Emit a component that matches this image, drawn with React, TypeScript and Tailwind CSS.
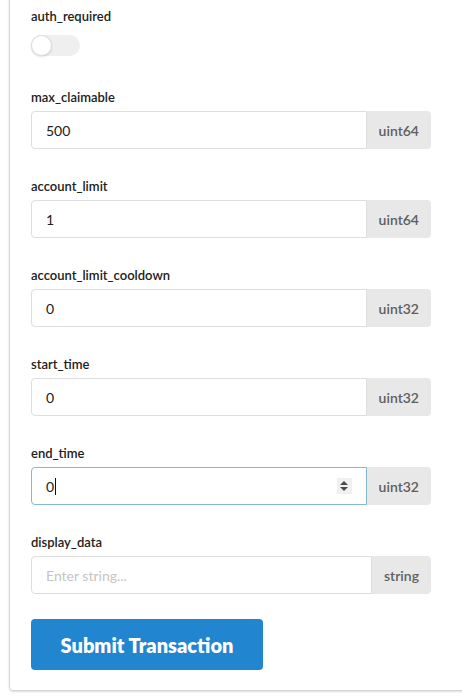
import React from 'react'

const font = { fontFamily: 'Lato, "Open Sans", Arial, sans-serif' }

type Field = { name: string; value?: string; type: string; placeholder?: string; focused?: boolean }

const fields: Field[] = [
  { name: 'max_claimable', value: '500', type: 'uint64' },
  { name: 'account_limit', value: '1', type: 'uint64' },
  { name: 'account_limit_cooldown', value: '0', type: 'uint32' },
  { name: 'start_time', value: '0', type: 'uint32' },
  { name: 'end_time', value: '0', type: 'uint32', focused: true },
  { name: 'display_data', type: 'string', placeholder: 'Enter string...' },
]

function Spinner() {
  return (
    <div className="flex h-[16px] w-[15px] flex-col items-center justify-center gap-[2px] bg-[#f0f0f0]">
      <svg width="8" height="4" viewBox="0 0 8 4">
        <path d="M0 4 L4 0 L8 4 Z" fill="#4a4a4a" />
      </svg>
      <svg width="8" height="4" viewBox="0 0 8 4">
        <path d="M0 0 L8 0 L4 4 Z" fill="#4a4a4a" />
      </svg>
    </div>
  )
}

function FieldRow({ field }: { field: Field }) {
  return (
    <div className="mt-[29px]">
      <label className="mb-[6px] block text-[13px] font-semibold leading-[16px] text-[#212121]">{field.name}</label>
      <div className="flex h-[38px]">
        {field.focused ? (
          <div className="flex flex-1 items-center rounded-l-[4px] border border-[#85b7d9] pl-[14px] pr-[14px] text-[14px] text-[#212121]">
            <span>{field.value}</span>
            <span className="ml-px h-[17px] w-px bg-[#111]" />
            <span className="flex-1" />
            <Spinner />
          </div>
        ) : (
          <input
            readOnly
            value={field.value ?? ''}
            placeholder={field.placeholder}
            className="min-w-0 flex-1 rounded-l-[4px] border border-[#dedede] px-[14px] text-[14px] text-[#212121] outline-none placeholder:text-[#c5c5c5]"
            style={font}
          />
        )}
        <div className="flex items-center rounded-r-[4px] bg-[#e8e8e8] px-[12px] text-[14px] font-semibold text-[#5e5e5e]">
          {field.type}
        </div>
      </div>
    </div>
  )
}

export default function App() {
  return (
    <div className="h-[700px] w-full overflow-hidden bg-white" style={font}>
      <div className="ml-[9px] mt-[-20px] w-[480px] rounded-[4px] border border-[#d4d4d5] pb-[20px] pl-[21px] pt-[27px] shadow-[0_1px_2px_0_rgba(34,36,38,0.15)]">
        <div className="w-[400px]">
          <label className="block text-[13px] font-semibold leading-[16px] text-[#212121]">auth_required</label>
          <div className="mt-[11px] flex h-[21px] w-[49px] items-center rounded-full bg-[#efefef]">
            <div className="h-[21px] w-[21px] rounded-full bg-white shadow-[0_1px_2px_0_rgba(34,36,38,0.15),0_0_0_1px_rgba(34,36,38,0.15)_inset]" />
          </div>
          <div className="h-[4px]" />
          {fields.map((f) => (
            <FieldRow key={f.name} field={f} />
          ))}
          <button className="mt-[25px] h-[51px] w-[232px] rounded-[4px] bg-[#2185d0] text-[20px] font-extrabold text-white">
            Submit Transaction
          </button>
        </div>
      </div>
    </div>
  )
}
